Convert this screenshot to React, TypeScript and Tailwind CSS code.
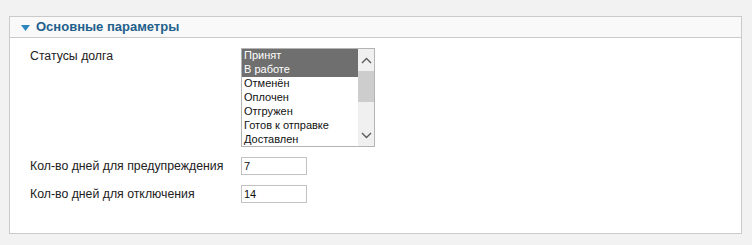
const statuses = ['Принят', 'В работе', 'Отменён', 'Оплочен', 'Отгружен', 'Готов к отправке', 'Доставлен'];
const selected = ['Принят', 'В работе'];

const Chevron = ({ up }: { up?: boolean }) => (
  <svg width="11" height="7" viewBox="0 0 11 7" className="block">
    <path
      d={up ? 'M1 6 L5.5 1.5 L10 6' : 'M1 1 L5.5 5.5 L10 1'}
      fill="none"
      stroke="#5a5a5a"
      strokeWidth="1.4"
    />
  </svg>
);

const StatusList = () => (
  <div className="flex h-[99px] w-[134px] border border-[#b4b4b4] bg-white">
    <div className="flex-1 overflow-hidden">
      {statuses.map((s) => (
        <div
          key={s}
          className={
            'h-[14px] pl-[2px] text-[11px] leading-[13px] ' +
            (selected.includes(s) ? 'bg-[#6f6f6f] text-white' : 'text-[#111]')
          }
        >
          {s}
        </div>
      ))}
    </div>
    <div className="flex w-[16px] flex-col bg-[#f0f0f0]">
      <div className="flex h-[22px] items-center justify-center">
        <Chevron up />
      </div>
      <div className="h-[31px] bg-[#cdcdcd]" />
      <div className="flex-1" />
      <div className="flex h-[22px] items-center justify-center">
        <Chevron />
      </div>
    </div>
  </div>
);

const NumberField = ({ value }: { value: string }) => (
  <input
    readOnly
    value={value}
    className="h-[18px] w-[66px] border border-[#c2c2c2] bg-white px-[2px] text-[11px] text-[#111] outline-none"
  />
);

export default function App() {
  return (
    <div
      className="h-[245px] w-[752px] bg-[#f2f2f2] pl-[9px] pr-[10px] pt-[16px]"
      style={{ fontFamily: '"Liberation Sans", Arial, sans-serif' }}
    >
      <div className="h-[218px] border border-[#cacaca] bg-white">
        <div className="flex h-[21px] items-center border-b border-[#cacaca] bg-[#f9f9f9] pl-[11px]">
          <svg width="9" height="6" viewBox="0 0 9 6" className="mr-[6px] mt-[1px]">
            <path d="M0 0 H9 L4.5 6 Z" fill="#2b86bf" />
          </svg>
          <span className="text-[13px] font-bold text-[#225f8c]">Основные параметры</span>
        </div>
        <div className="grid grid-cols-[211px_1fr] gap-y-[10px] pl-[20px] pt-[10px] text-[12.3px] text-[#222]">
          <div className="-mt-[1px]">Статусы долга</div>
          <StatusList />
          <div className="leading-[18px]">Кол-во дней для предупреждения</div>
          <NumberField value="7" />
          <div className="leading-[18px]">Кол-во дней для отключения</div>
          <NumberField value="14" />
        </div>
      </div>
    </div>
  );
}
